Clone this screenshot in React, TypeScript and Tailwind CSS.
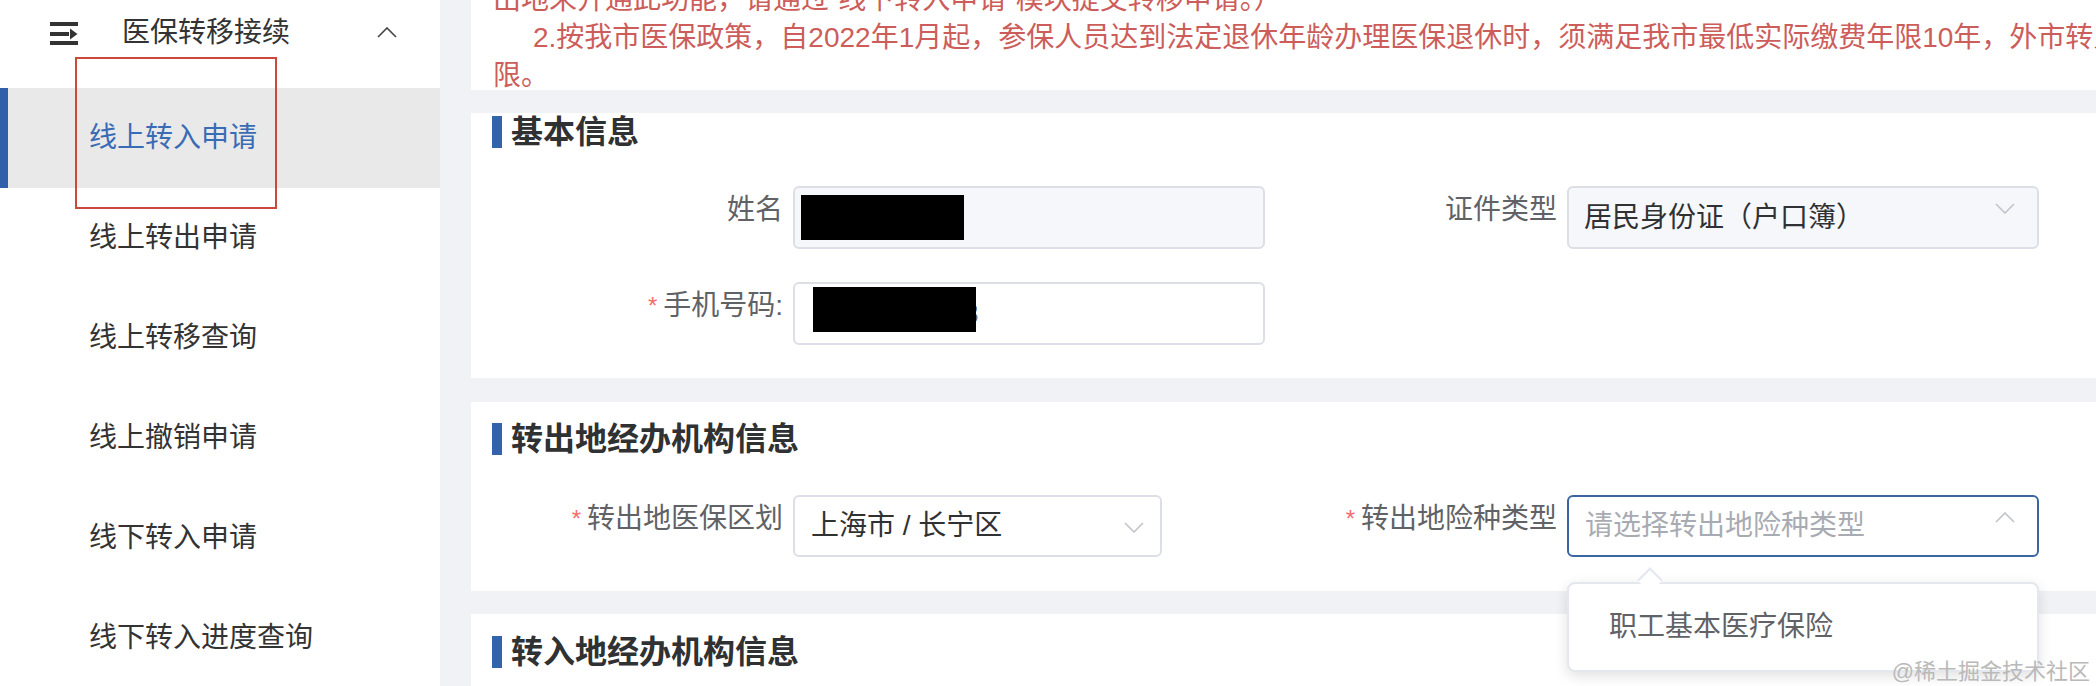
import type React from "react"

const font = { fontFamily: '"Liberation Sans", "Noto Sans CJK SC", sans-serif' }

const menuItems = ["线上转入申请", "线上转出申请", "线上转移查询", "线上撤销申请", "线下转入申请", "线下转入进度查询"]

const MenuIcon = () => (
  <svg width="28" height="23" viewBox="0 0 28 23" className="shrink-0">
    <rect x="0" y="0" width="28" height="4" fill="#333" />
    <rect x="0" y="10" width="19" height="4" fill="#333" />
    <polygon points="20,6.5 27.5,12 20,17.5" fill="#333" />
    <rect x="0" y="19" width="28" height="4" fill="#333" />
  </svg>
)

const Chevron = ({ up, color = "#c0c4cc" }: { up?: boolean; color?: string }) => (
  <svg width="20" height="11" viewBox="0 0 20 11">
    <polyline
      points={up ? "1,10 10,1 19,10" : "1,1 10,10 19,1"}
      fill="none"
      stroke={color}
      strokeWidth="1.6"
    />
  </svg>
)

const SectionTitle = ({ children }: { children: React.ReactNode }) => (
  <div className="flex items-center h-[32px]">
    <div className="w-[10px] h-[32px] bg-[#3463ad]" />
    <h2 className="ml-[9px] text-[32px] leading-[32px] font-bold text-[#303133]">{children}</h2>
  </div>
)

const Label = ({ children, required }: { children: React.ReactNode; required?: boolean }) => (
  <div className="w-[301px] shrink-0 pr-[10px] text-right text-[28px] leading-[48px] text-[#606266] whitespace-nowrap">
    {required && <span className="text-[#f56c6c] text-[24px] mr-[6px] align-top">*</span>}
    {children}
  </div>
)

export default function App() {
  return (
    <div className="relative w-[2096px] h-[686px] overflow-hidden flex bg-[#f0f2f5]" style={font}>
      {/* sidebar */}
      <aside className="relative w-[440px] h-full shrink-0 bg-white">
        <div className="h-[88px] pb-[22px] flex items-center pl-[50px] pr-[43px]">
          <MenuIcon />
          <span className="ml-[44px] text-[28px] text-[#333]">医保转移接续</span>
          <span className="ml-auto mb-[2px]">
            <Chevron up color="#444" />
          </span>
        </div>
        {menuItems.map((item, i) => (
          <div
            key={item}
            className={`relative h-[100px] flex items-center pl-[89px] text-[28px] ${
              i === 0 ? "bg-[#e9e9e9] text-[#3a6bb5]" : "text-[#333]"
            }`}
          >
            {i === 0 && <div className="absolute left-0 top-0 h-full w-[8px] bg-[#3060aa]" />}
            {item}
          </div>
        ))}
        <div className="absolute left-[75px] top-[57px] w-[202px] h-[152px] border-2 border-[#c9493b]" />
      </aside>

      {/* main */}
      <main className="ml-[31px] w-[1700px] shrink-0 flex flex-col">
        <div className="h-[90px] bg-white overflow-hidden pl-[22px] text-[28px] leading-[38px] text-[#cc5d5a]">
          <div className="-mt-[19px] whitespace-nowrap">出地未开通此功能，请通过“线下转入申请”模块提交转移申请。）</div>
          <div className="whitespace-nowrap pl-[40px]">
            2.按我市医保政策，自2022年1月起，参保人员达到法定退休年龄办理医保退休时，须满足我市最低实际缴费年限10年，外市转入缴费年限合并计算后须满足最低缴费年
          </div>
          <div className="whitespace-nowrap">限。</div>
        </div>

        <section className="mt-[23px] bg-white h-[265px] pl-[21px] pt-[3px]">
          <SectionTitle>基本信息</SectionTitle>
          <div className="mt-[38px] grid grid-cols-[774px_774px] gap-y-[33px]">
            <div className="flex">
              <Label>姓名</Label>
              <div className="w-[472px] h-[63px] rounded-[6px] border-2 border-[#dcdfe6] bg-[#f5f7fa] flex items-center pl-[6px]">
                <div className="w-[163px] h-[45px] bg-black" />
              </div>
            </div>
            <div className="flex">
              <Label>证件类型</Label>
              <div className="relative w-[472px] h-[63px] rounded-[6px] border-2 border-[#dcdfe6] bg-[#f5f7fa] flex items-center pl-[15px] text-[28px] text-[#303133]">
                居民身份证（户口簿）
                <span className="absolute right-[22px] top-[15px]">
                  <Chevron />
                </span>
              </div>
            </div>
            <div className="flex">
              <Label required>手机号码:</Label>
              <div className="w-[472px] h-[63px] rounded-[6px] border-2 border-[#dcdfe6] bg-white flex items-center pl-[18px]">
                <div className="relative text-[28px] text-[#606266]">
                  <span className="pl-[150px]">8</span>
                  <div className="absolute left-0 top-[-6px] w-[163px] h-[45px] bg-black" />
                </div>
              </div>
            </div>
          </div>
        </section>

        <section className="mt-[24px] bg-white h-[189px] pl-[21px] pt-[21px]">
          <SectionTitle>转出地经办机构信息</SectionTitle>
          <div className="mt-[40px] grid grid-cols-[774px_774px]">
            <div className="flex">
              <Label required>转出地医保区划</Label>
              <div className="relative w-[369px] h-[62px] rounded-[6px] border-2 border-[#dcdfe6] bg-white flex items-center pl-[16px] text-[28px] text-[#303133]">
                上海市 / 长宁区
                <span className="absolute right-[16px] top-[25px]">
                  <Chevron />
                </span>
              </div>
            </div>
            <div className="flex">
              <Label required>转出地险种类型</Label>
              <div className="relative w-[472px] h-[62px] rounded-[6px] border-2 border-[#3b64a3] bg-white flex items-center pl-[16px] text-[28px] text-[#a8abb2]">
                请选择转出地险种类型
                <span className="absolute right-[22px] top-[15px]">
                  <Chevron up />
                </span>
                {/* dropdown */}
                <div className="absolute left-[-2px] top-[85px] w-[472px] h-[90px] z-10 rounded-[8px] border-2 border-[#e4e7ed] bg-white shadow-[0_4px_14px_rgba(0,0,0,0.12)] flex items-center pl-[40px] text-[28px] text-[#606266]">
                  <div className="absolute left-[72px] top-[-13px] w-[18px] h-[18px] rotate-45 bg-white border-l-2 border-t-2 border-[#e4e7ed]" />
                  职工基本医疗保险
                </div>
              </div>
            </div>
          </div>
        </section>

        <section className="mt-[23px] bg-white flex-1 pl-[21px] pt-[22px]">
          <SectionTitle>转入地经办机构信息</SectionTitle>
        </section>
      </main>

      <div className="absolute right-[6px] top-[657px] text-[22px] leading-[30px] text-[#b9b9b9] whitespace-nowrap z-20">
        @稀土掘金技术社区
      </div>
    </div>
  )
}
